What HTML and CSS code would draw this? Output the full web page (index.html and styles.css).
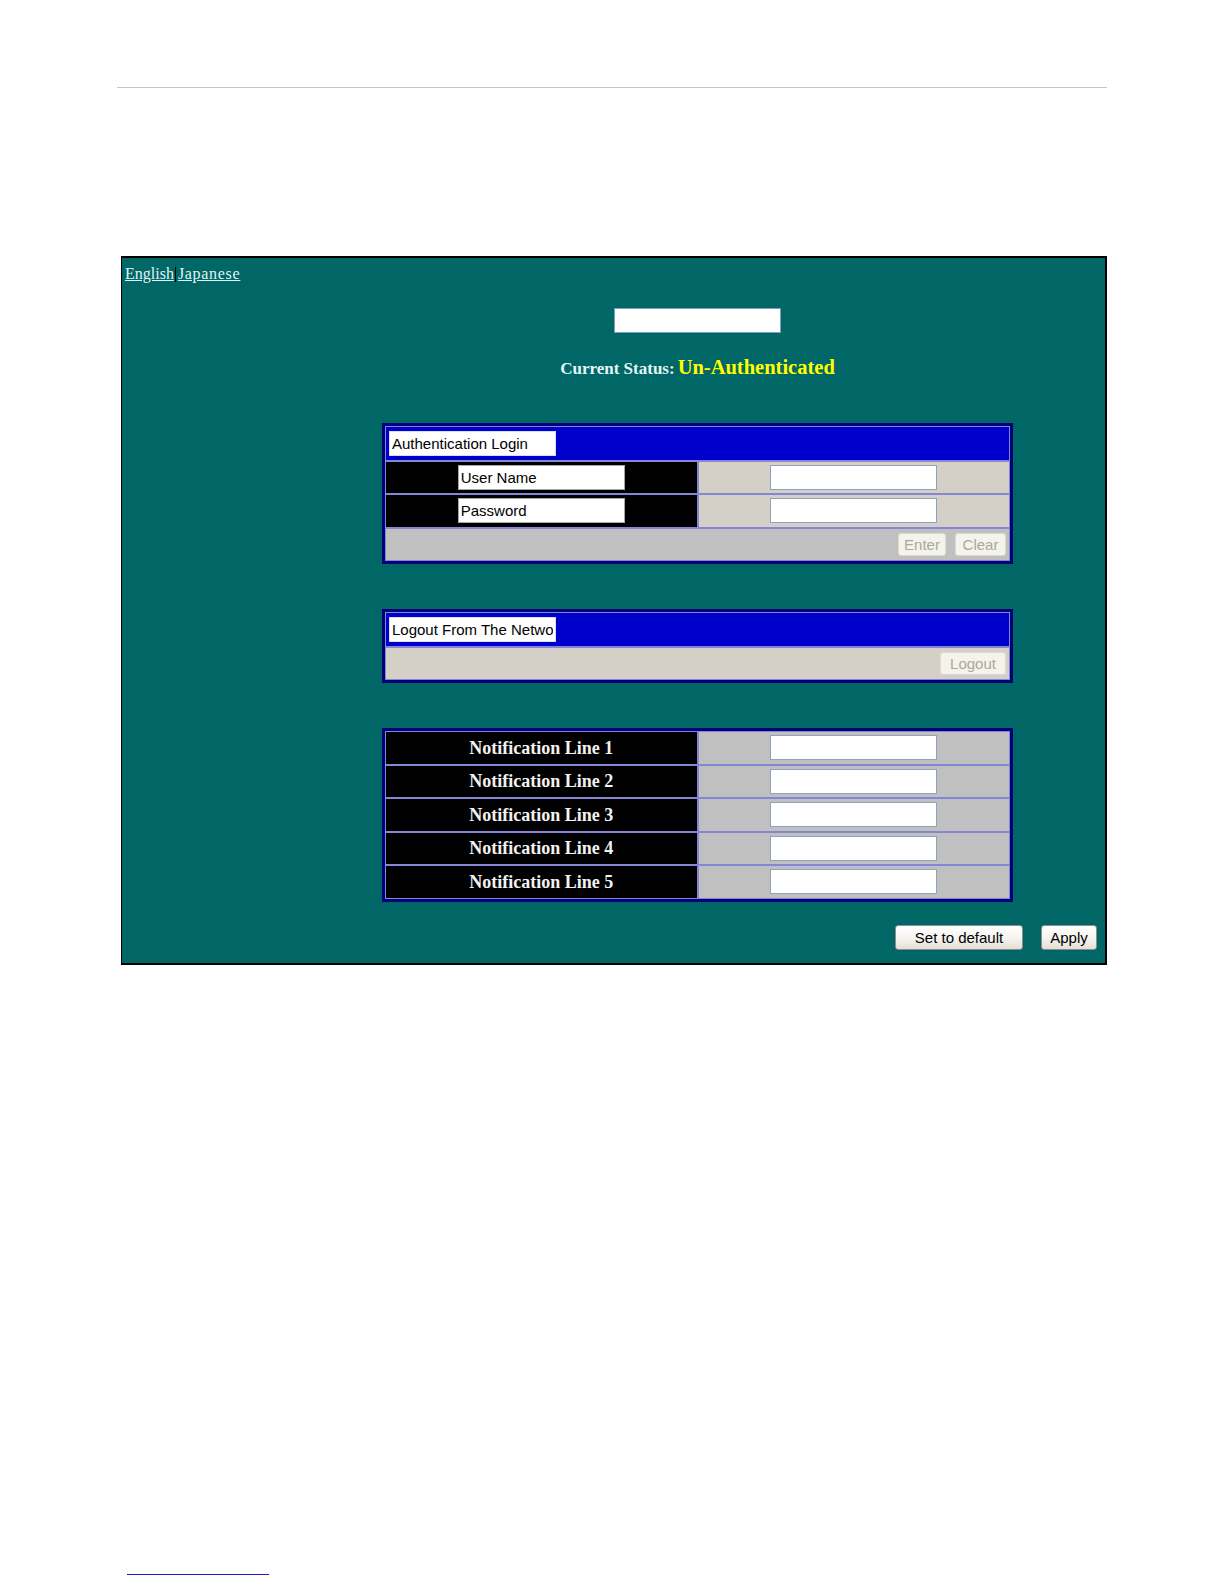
FILE: index.html
```html
<!DOCTYPE html>
<html lang="en">
<head>
<meta charset="utf-8">
<title>Authentication Login</title>
<link rel="stylesheet" href="styles.css">
</head>
<body>
<div class="rule"></div>
<div class="panel">
  <div class="langs"><a class="lang" href="#">English</a><span class="caret"></span><a class="lang lang-ja" href="#">Japanese</a></div>
  <div class="content">
    <div class="status-box"></div>
    <div class="status"><span class="status-label">Current Status:</span><span class="status-value">Un-Authenticated</span></div>

    <div class="tbl auth">
      <div class="hdr"><input class="field" type="text" value="Authentication Login" readonly></div>
      <div class="row">
        <div class="cell dark"><input class="field" type="text" value="User Name" readonly></div>
        <div class="cell light"><input class="field" type="text"></div>
      </div>
      <div class="row">
        <div class="cell dark"><input class="field" type="text" value="Password" readonly></div>
        <div class="cell light"><input class="field" type="password"></div>
      </div>
      <div class="btnrow silver">
        <button class="btn-off enter" disabled>Enter</button>
        <button class="btn-off clear" disabled>Clear</button>
      </div>
    </div>

    <div class="tbl logout">
      <div class="hdr"><input class="field" type="text" value="Logout From The Network" readonly></div>
      <div class="btnrow light">
        <button class="btn-off logout-btn" disabled>Logout</button>
      </div>
    </div>

    <div class="tbl notif">
      <div class="row">
        <div class="cell dark label">Notification Line 1</div>
        <div class="cell silver"><input class="field" type="text"></div>
      </div>
      <div class="row">
        <div class="cell dark label">Notification Line 2</div>
        <div class="cell silver"><input class="field" type="text"></div>
      </div>
      <div class="row">
        <div class="cell dark label">Notification Line 3</div>
        <div class="cell silver"><input class="field" type="text"></div>
      </div>
      <div class="row">
        <div class="cell dark label">Notification Line 4</div>
        <div class="cell silver"><input class="field" type="text"></div>
      </div>
      <div class="row">
        <div class="cell dark label">Notification Line 5</div>
        <div class="cell silver"><input class="field" type="text"></div>
      </div>
    </div>
  </div>
  <div class="actions">
    <button class="btn default-btn">Set to default</button>
    <button class="btn apply-btn">Apply</button>
  </div>
</div>
<div class="footline"></div>
</body>
</html>
```
FILE: styles.css
```css
html, body {
  margin: 0;
  padding: 0;
  background: #ffffff;
}

body {
  font-family: "Liberation Serif", "Times New Roman", serif;
}

.rule {
  margin-top: 87px;
  margin-left: 117px;
  width: 990px;
  height: 1px;
  background: #c4c4c4;
}

.panel {
  margin-top: 168px;
  margin-left: 121px;
  width: 986px;
  box-sizing: border-box;
  background: #006666;
  border: 2px solid #000000;
  border-left-width: 1px;
  padding: 7px 8px 13px 3px;
}

.langs {
  height: 18px;
  line-height: 18px;
  font-size: 16px;
  display: flex;
  align-items: center;
}

.lang {
  color: #e2f4f4;
  text-decoration: underline;
}

.lang-ja {
  letter-spacing: 0.7px;
}

.caret {
  display: inline-block;
  width: 1px;
  height: 15px;
  margin: 0 1.5px;
  background: #000000;
}

.content {
  margin-left: 257px;
  width: 631px;
  display: flex;
  flex-direction: column;
  align-items: center;
}

.status-box {
  margin-top: 25px;
  width: 167px;
  height: 25px;
  box-sizing: border-box;
  background: #ffffff;
  border: 1px solid #7f9db9;
}

.status {
  margin-top: 22px;
  height: 25px;
  line-height: 24px;
  font-size: 20.5px;
  font-weight: bold;
  white-space: nowrap;
}

.status-label {
  font-size: 17px;
  color: #e4f6f6;
  margin-right: 3px;
}

.status-value {
  color: #ffff00;
}

.tbl {
  width: 631px;
  box-sizing: border-box;
  border: 3px solid #00007a;
  background: #8686d8;
  padding: 1px;
  display: flex;
  flex-direction: column;
  gap: 2px;
}

.auth {
  margin-top: 43px;
}

.logout {
  margin-top: 45px;
}

.notif {
  margin-top: 45px;
}

.hdr {
  height: 32.5px;
  background: #0000cc;
  display: flex;
  align-items: center;
  padding-left: 3px;
}

.row {
  height: 31.5px;
  display: grid;
  grid-template-columns: 1fr 1fr;
  gap: 2px;
}

.cell {
  display: flex;
  align-items: center;
  justify-content: center;
}

.dark {
  background: #000000;
}

.light {
  background: #d4d0c8;
}

.silver {
  background: #c0c0c0;
}

.label {
  color: #f2f2f2;
  font-family: "Liberation Serif", "Times New Roman", serif;
  font-weight: bold;
  font-size: 18px;
  padding-top: 1px;
  box-sizing: border-box;
}

.field {
  width: 167px;
  height: 25px;
  box-sizing: border-box;
  margin: 0;
  padding: 0 2px;
  border: 1px solid #8ea2bc;
  background: #ffffff;
  color: #000000;
  font-family: "Liberation Sans", Arial, sans-serif;
  font-size: 15px;
  outline: none;
}

.hdr .field {
  border-color: #dcdcf4;
}

.dark .field {
  border-color: #a8a8a8;
}

.btnrow {
  height: 31.5px;
  display: flex;
  align-items: center;
  justify-content: flex-end;
  gap: 9px;
  padding-right: 3px;
}

.btn-off {
  height: 23px;
  box-sizing: border-box;
  margin: 0;
  padding: 0;
  border: 1px solid #dcdad0;
  border-radius: 3px;
  background: #f4f3ec;
  color: #aca899;
  font-family: "Liberation Sans", Arial, sans-serif;
  font-size: 15px;
}

.enter {
  width: 48px;
}

.clear {
  width: 51px;
}

.logout-btn {
  width: 66px;
}

.actions {
  margin-top: 23px;
  display: flex;
  justify-content: flex-end;
  gap: 18px;
}

.btn {
  height: 25px;
  box-sizing: border-box;
  margin: 0;
  padding: 0;
  border: 1px solid #8c8c8c;
  border-radius: 3px;
  background: linear-gradient(#ffffff 0%, #f4f3ee 55%, #e2dfd6 100%);
  color: #000000;
  font-family: "Liberation Sans", Arial, sans-serif;
  font-size: 15px;
}

.default-btn {
  width: 128px;
}

.apply-btn {
  width: 56px;
}

.footline {
  margin-top: 609px;
  margin-left: 127px;
  width: 142px;
  height: 1px;
  background: #1c1cc0;
}
```
